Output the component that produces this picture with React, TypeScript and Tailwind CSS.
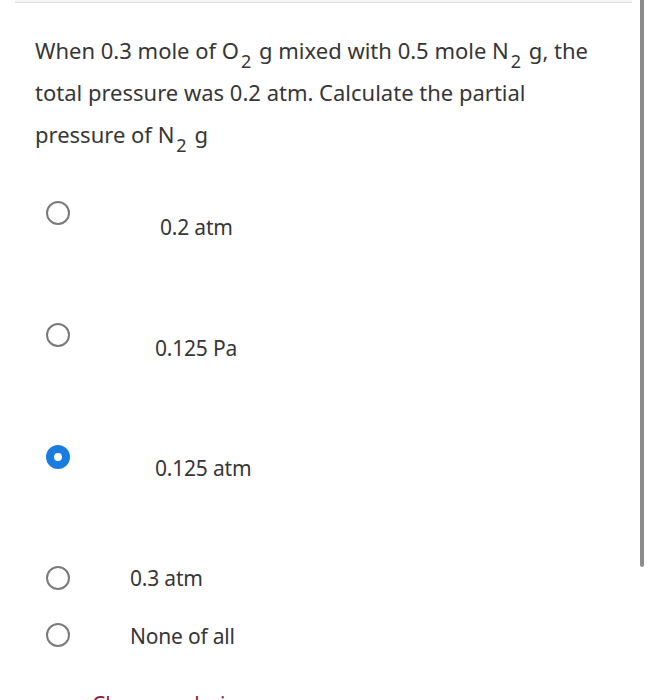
import React from "react";

const options = [
  { label: "0.2 atm", rowH: "h-[122px]", textMt: "mt-[12px]", textMl: "ml-[90px]", checked: false },
  { label: "0.125 Pa", rowH: "h-[122px]", textMt: "mt-[11px]", textMl: "ml-[85px]", checked: false },
  { label: "0.125 atm", rowH: "h-[121px]", textMt: "mt-[9px]", textMl: "ml-[85px]", checked: true },
  { label: "0.3 atm", rowH: "h-[57px]", textMt: "mt-[-2px]", textMl: "ml-[60px]", checked: false },
  { label: "None of all", rowH: "h-[57px]", textMt: "mt-[-1px]", textMl: "ml-[60px]", checked: false },
];

function Radio({ checked }: { checked: boolean }) {
  if (checked) {
    return <div className="w-[24px] h-[24px] shrink-0 rounded-full border-[8px] border-[#1a7be0] bg-white"></div>;
  }
  return <div className="w-[24px] h-[24px] shrink-0 rounded-full border-2 border-[#7a7a7a] bg-white"></div>;
}

function Sub() {
  return <span className="relative top-[9px] text-[18px] leading-[0] ml-[2px] mr-[2px]">2</span>;
}

export default function App() {
  return (
    <div className="w-[650px] h-[700px] bg-white relative overflow-hidden font-['Noto_Sans',sans-serif] text-[#363636]">
      {/* card edge above */}
      <div className="ml-[15px] w-[617px] h-[3px] bg-[#f6f6f6] border-b border-[#dedede]"></div>

      {/* scrollbar */}
      <div className="absolute left-[640px] top-0 w-[4px] h-[567px] bg-[#8c8c8c] rounded-b"></div>

      {/* question */}
      <p className="pl-[35px] w-[612px] pt-[26px] text-[22px] leading-[42px]">
        When 0.3 mole of O<Sub /> g mixed with 0.5 mole N<Sub /> g, the total pressure was 0.2 atm. Calculate the partial pressure of N<Sub /> g
      </p>

      {/* answers */}
      <div className="mt-[46px] flex flex-col">
        {options.map((o, i) => (
          <div key={i} className={`flex items-start pl-[46px] ${o.rowH}`}>
            <Radio checked={o.checked} />
            <span className={`${o.textMl} ${o.textMt} text-[21px] leading-[28px] tracking-[-0.2px]`}>{o.label}</span>
          </div>
        ))}
      </div>

      <div className="pl-[92px] mt-[10px] text-[21px] leading-[28px] text-[#8c1d40]">Clear my choice</div>
    </div>
  );
}
